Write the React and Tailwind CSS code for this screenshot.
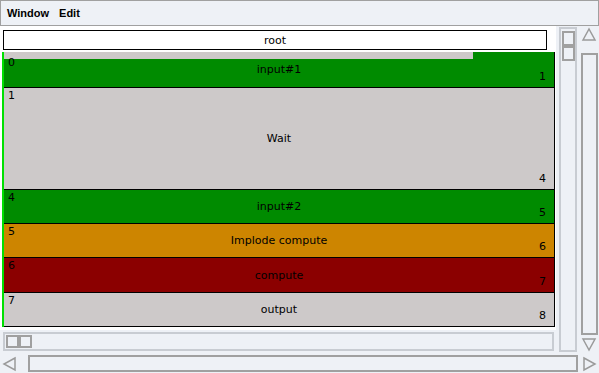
import React from 'react';

const rows = [
  { h: 'h-[36px]', bg: 'bg-[#008b00]', label: 'input#1', top: '0', end: '1', strip: true },
  { h: 'h-[102px]', bg: 'bg-[#cdc9c9]', label: 'Wait', top: '1', end: '4' },
  { h: 'h-[34px]', bg: 'bg-[#008b00]', label: 'input#2', top: '4', end: '5' },
  { h: 'h-[34px]', bg: 'bg-[#cd8500]', label: 'Implode compute', top: '5', end: '6' },
  { h: 'h-[35px]', bg: 'bg-[#8b0000]', label: 'compute', top: '6', end: '7' },
  { h: 'h-[34px]', bg: 'bg-[#cdc9c9]', label: 'output', top: '7', end: '8' },
];

const Arrow = ({ dir }) => {
  const pts = {
    up: '2,13 8,2 14,13',
    down: '2,2 8,13 14,2',
    left: '13,2 2,8 13,14',
    right: '2,2 13,8 2,14',
  }[dir];
  return (
    <svg width="16" height="16" viewBox="0 0 16 16" className="block">
      <polygon points={pts} fill="none" stroke="#9a9a9a" strokeWidth="1.5" />
    </svg>
  );
};

const Row = ({ row }) => (
  <div className={`relative ${row.h} ${row.bg} border-b border-black flex items-center justify-center`}>
    {row.strip && <div className="absolute left-0 top-0 w-[469px] h-[7px] bg-[#cdc9c9]" />}
    <span className={`absolute left-[4px] leading-none ${row.strip ? 'top-[5px]' : 'top-[2px]'}`}>{row.top}</span>
    <span className="relative leading-none">{row.label}</span>
    <span className="absolute right-[8px] bottom-[5px] leading-none">{row.end}</span>
  </div>
);

export default function App() {
  return (
    <div
      className="w-[599px] h-[373px] bg-[#eef1f6] overflow-hidden text-[11px] text-black"
      style={{ fontFamily: '"DejaVu Sans", "Liberation Sans", sans-serif' }}
    >
      {/* menu bar */}
      <div className="h-[26px] border border-[#a0a0a0] flex items-center gap-[10px] px-[6px] font-bold" style={{ fontFamily: '"Liberation Sans", sans-serif' }}>
        <span>Window</span>
        <span>Edit</span>
      </div>

      <div className="flex h-[327px]">
        {/* left column */}
        <div className="w-[556px] flex flex-col">
          <div className="h-[304px] bg-white pt-[4px]">
            <div className="ml-[3px] w-[544px] h-[20px] border border-black bg-white flex items-center justify-center leading-none">
              root
            </div>
            <div className="mt-[2px] ml-[2px] w-[553px] flex">
              <div className="w-[2px] h-[275px] bg-[#00e000]" />
              <div className="flex-1 border-r border-black">
                {rows.map((r) => (
                  <Row key={r.top} row={r} />
                ))}
              </div>
            </div>
          </div>
          {/* inner horizontal scrollbar */}
          <div className="mt-[2px] ml-[3px] w-[551px] h-[19px] border-2 border-[#c8ccd2] flex items-center pl-[1px]">
            <div className="w-[13px] h-[13px] border-2 border-[#a0a0a0]" />
            <div className="w-[13px] h-[13px] border-2 border-[#a0a0a0]" />
          </div>
        </div>

        {/* inner vertical scrollbar */}
        <div className="ml-[3px] mt-[1px] w-[18px] h-[325px] border-2 border-[#c8ccd2] flex flex-col items-center pt-[2px]">
          <div className="w-[13px] h-[15px] border-2 border-[#a0a0a0]" />
          <div className="w-[13px] h-[15px] border-2 border-[#a0a0a0]" />
        </div>

        {/* outer vertical scrollbar */}
        <div className="ml-[4px] mt-[1px] w-[17px] h-[326px] flex flex-col">
          <Arrow dir="up" />
          <div className="flex-1 mt-[10px] mb-[2px] border-2 border-[#a0a0a0] border-t-[#a0a0a0]" />
          <Arrow dir="down" />
        </div>
      </div>

      {/* bottom horizontal scrollbar */}
      <div className="flex items-center h-[19px] mt-[1px] pl-[2px]">
        <Arrow dir="left" />
        <div className="ml-[10px] w-[550px] h-[17px] border-2 border-[#a0a0a0]" />
        <div className="ml-[4px]">
          <Arrow dir="right" />
        </div>
      </div>
    </div>
  );
}
